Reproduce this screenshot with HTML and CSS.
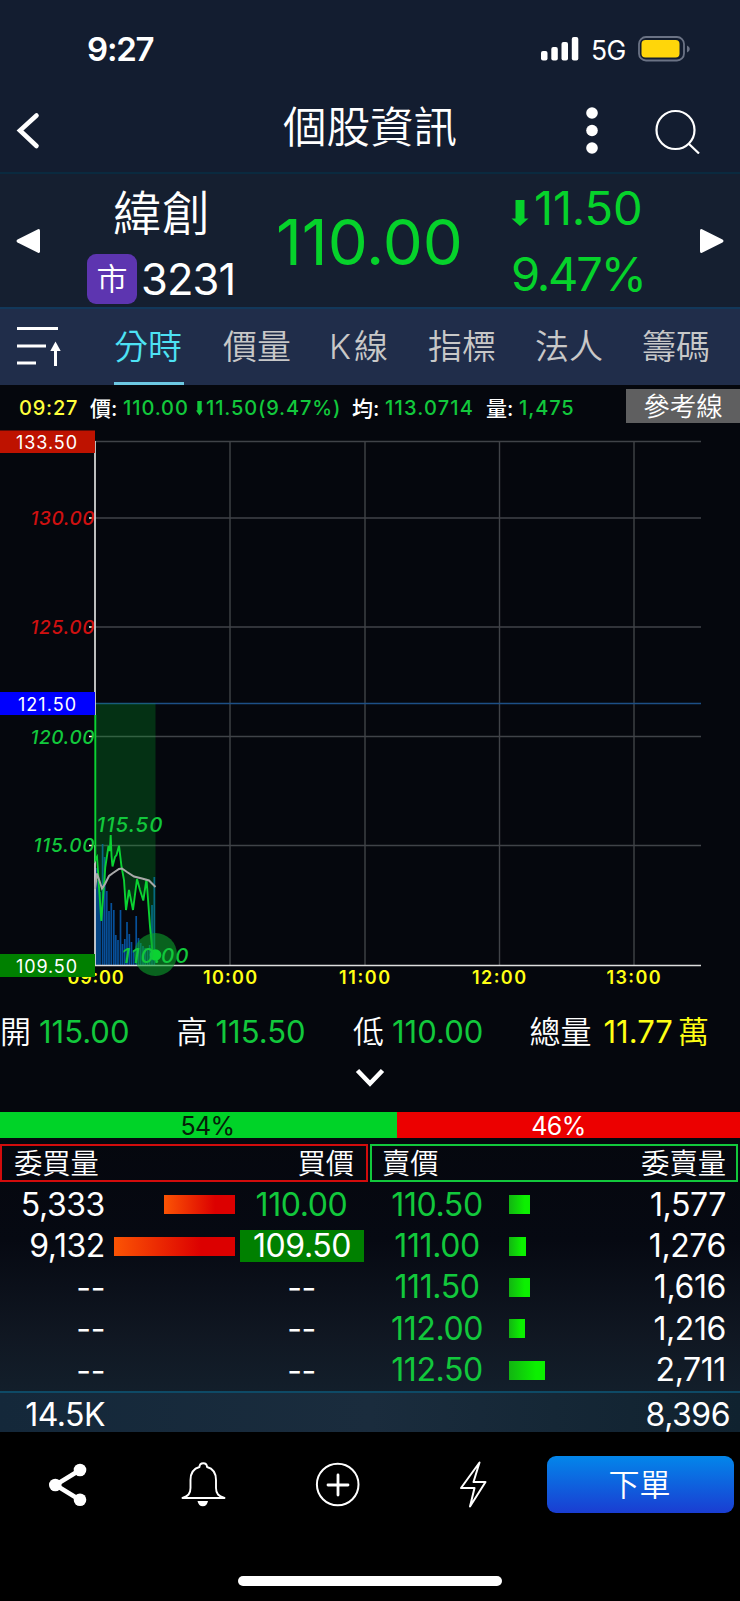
FILE: index.html
```
<!DOCTYPE html>
<html lang="zh-Hant">
<head>
<meta charset="utf-8">
<title>個股資訊</title>
<link rel="stylesheet" href="styles.css">
</head>
<body>
<div class="app">
  <header class="top">
    <div class="status">
      <span class="clock">9:27</span>
      <svg class="signal" width="38" height="24" viewBox="0 0 38 24" fill="#fff"><rect x="0" y="14" width="6.5" height="9.500" rx="2"/><rect x="10.300" y="10" width="6.500" height="13.500" rx="2"/><rect x="20.500" y="5" width="6.500" height="18.500" rx="2"/><rect x="30.800" y="0" width="6.500" height="23.500" rx="2"/></svg>
      <span class="net">5G</span>
      <svg class="battery" width="53" height="26" viewBox="0 0 53 26"><rect x="1" y="1" width="45" height="23.500" rx="7" fill="none" stroke="#6b7385" stroke-width="1.800"/><rect x="3.500" y="4" width="38" height="17.500" rx="4" fill="#ffd60a"/><path d="M49 9.500q2.800 1 2.800 3.500t-2.800 3.500z" fill="#6b7385"/></svg>
    </div>
    <div class="titlebar">
      <svg class="back" width="26" height="40" viewBox="0 0 26 40" fill="none" stroke="#fff" stroke-width="4.600" stroke-linecap="round"><path d="M21.500 5.500L5 20.500 21.500 36"/></svg>
      <h1>個股資訊</h1>
      <svg class="more" width="14" height="50" viewBox="0 0 14 50" fill="#fff"><circle cx="7" cy="8" r="5.800"/><circle cx="7" cy="25.500" r="5.800"/><circle cx="7" cy="43" r="5.800"/></svg>
      <svg class="search" width="48" height="48" viewBox="0 0 48 48" fill="none" stroke="#fff" stroke-width="2.200"><circle cx="21.500" cy="24" r="19"/><path d="M34.500 37.500L45 47.500"/></svg>
    </div>
  </header>

  <section class="quote">
    <svg class="tri" width="26" height="26" viewBox="0 0 26 26" fill="#fff"><path d="M2.500 11.500L23 1.200q2-.7 2 1.500v20.600q0 2.200-2 1.500L2.500 14.500q-2-1.500 0-3z"/></svg>
    <div class="stock">
      <div class="name">緯創</div>
      <div class="code"><span class="market">市</span><span class="num">3231</span></div>
    </div>
    <div class="price">110.00</div>
    <div class="change">
      <div class="diff"><svg width="18" height="27" viewBox="0 0 18 27" fill="#06d22b"><path d="M4.500 0h9v18.500H17.500L9 26 .5 18.500h4z"/></svg><span>11.50</span></div>
      <div class="pct">9.47%</div>
    </div>
    <svg class="tri next" width="26" height="26" viewBox="0 0 26 26" fill="#fff"><path d="M24.500 11.500L4 1.200q-2-.7-2 1.500v20.600q0 2.200 2 1.500l20.500-10.300q2-1.500 0-3z"/></svg>
  </section>

  <nav class="tabs">
    <svg class="sort" width="48" height="46" viewBox="0 0 48 46" fill="none" stroke="#fff" stroke-width="3"><path d="M2 4.500h41M2 22h29M2 39h19M40.500 42V24"/><path d="M40.500 17.500l5.200 9.500h-10.400z" fill="#fff" stroke="none"/></svg>
    <span class="tab active">分時</span><span class="tab">價量</span><span class="tab k">K線</span><span class="tab">指標</span><span class="tab">法人</span><span class="tab">籌碼</span>
  </nav>

  <section class="info">
    <span class="time">09:27</span>
    <span class="lbl p">價:</span><span class="val v1">110.00</span>
    <svg class="dn" width="7" height="15" viewBox="0 0 7 15" fill="#12c83c"><path d="M1.300 0h4.400v9.500H7L3.500 14.500 0 9.500h1.300z"/></svg><span class="val v2">11.50(9.47%)</span>
    <span class="lbl a">均:</span><span class="val v3">113.0714</span>
    <span class="lbl q">量:</span><span class="val v4">1,475</span>
    <span class="ref">參考線</span>
  </section>

  <svg class="chart" width="740" height="565" viewBox="0 425 740 565">
    <g class="grid">
      <path d="M95 441.500H701M95 518H701M95 627H701M95 736.500H701M95 845.500H701"/>
      <path d="M230 441V965M365 441V965M499.500 441V965M634 441V965"/>
    </g>
    <path d="M95 703.500H701" stroke="#1d4f86" stroke-width="1.500"/>
    <g class="vol">
      <path d="M96 868V965M98 880V965M100 892V965M102.600 844V965M104.700 857V965M106.800 891V965M109 911V965M111.300 903V965M113.800 910V965M115.800 935V965M118 940V965M120.500 910V965M122.600 944V965M124.800 939V965M127 922V965M129.300 934V965M131.500 942V965M133.700 950V965M136.200 916V965M138.500 938V965M140.700 943V965M143 946V965M145.200 948V965M147.500 948V965M149.700 945V965M152 905V965M154.300 877V965"/>
    </g>
    <path d="M95 703.500H155.500V954L152.500 952 150 926.500 146.500 879 143.300 900.500 140 890 137 879 133 910 129 890 126 910 124 880 121.500 866.500 119 845.700 116 856 112.500 866.500 110.700 835 108.500 846 105.300 867 101.300 921 97 857 95 860z" fill="#06c82f" fill-opacity=".22"/>
    <path d="M95 441V715M95 845V966" stroke="#ddd" stroke-width="1.700"/>
    <path d="M94.500 965.500H701" stroke="#ddd" stroke-width="1.600"/>
    <path d="M89 518h4M89 627h4M89 736.500h4M89 845.500h4" stroke="#fff" stroke-width="1.500"/>
    <path d="M95.300 715V860L97 857 101.300 921 105.300 867 108.500 846 109.800 851 110.700 835 111.500 856 112.500 866.500 115 857 116.500 855 119 845.700 121.500 866.500 124 880 126 910 129 890 133 910 137 879 140 890 143.300 900.500 146.500 879 150 926.500 152.500 952 155.500 955" fill="none" stroke="#0bd232" stroke-width="1.900"/>
    <path d="M95 889L97 873.500 102 888.500 105 884 109 876 113 873 119 869 122 868.500 127 872 134 876.500 142 878.500 149 880.500 155.500 887" fill="none" stroke="#a9a9a9" stroke-width="2"/>
    <g class="axis up"><text x="30.500" y="525" textLength="64">130.00</text><text x="30.500" y="634" textLength="64">125.00</text></g>
    <g class="axis down"><text x="30.500" y="743.500" textLength="64">120.00</text><text x="33.500" y="852" textLength="61">115.00</text></g>
    <g class="xaxis"><text x="67.500" y="983.500" textLength="56">09:00</text><text x="203" y="983.500" textLength="54">10:00</text><text x="339" y="983.500" textLength="51">11:00</text><text x="472" y="983.500" textLength="54">12:00</text><text x="606.500" y="983.500" textLength="54">13:00</text></g>
    <circle cx="155.500" cy="954.500" r="21.500" fill="#0ca62b" fill-opacity=".58"/>
    <circle cx="155.500" cy="955" r="5.800" fill="#0bd232"/>
    <g class="axis down big"><text x="96.500" y="832" textLength="66">115.50</text><text x="121.500" y="963" textLength="67">110.00</text></g>
    <path d="M0 430.500h95v22.500H0z" fill="#be1200"/>
    <path d="M0 692h95v23H0z" fill="#0000fe"/>
    <path d="M0 954h95v23H0z" fill="#008000"/>
    <g class="tag"><text x="16" y="449" textLength="61">133.50</text><text x="18" y="711" textLength="58">121.50</text><text x="16" y="973" textLength="61">109.50</text></g>
  </svg>

  <section class="ohlc">
    <div class="cell"><span>開</span><b>115.00</b></div>
    <div class="cell"><span>高</span><b>115.50</b></div>
    <div class="cell"><span>低</span><b>110.00</b></div>
    <div class="cell total"><span>總量</span><b>11.77</b><i>萬</i></div>
  </section>
  <div class="expand"><svg width="30" height="20" viewBox="0 0 30 20" fill="none" stroke="#fff" stroke-width="4.600"><path d="M2.500 2.500L15 15.500 27.500 2.500"/></svg></div>

  <section class="book">
    <div class="ratio"><span class="buy">54%</span><span class="sell">46%</span></div>
    <div class="heads">
      <div class="head bid"><span>委買量</span><span>買價</span></div>
      <div class="head ask"><span>賣價</span><span>委賣量</span></div>
    </div>
    <div class="row"><span class="bv">5,333</span><span class="bb"><i style="width:71px"></i></span><span class="bp">110.00</span><span class="ap">110.50</span><span class="ab"><i style="width:21px"></i></span><span class="av">1,577</span></div>
    <div class="row"><span class="bv">9,132</span><span class="bb"><i style="width:121px"></i></span><span class="bp hit">109.50</span><span class="ap">111.00</span><span class="ab"><i style="width:17px"></i></span><span class="av">1,276</span></div>
    <div class="row"><span class="bv none">--</span><span class="bb"></span><span class="bp none">--</span><span class="ap">111.50</span><span class="ab"><i style="width:21px"></i></span><span class="av">1,616</span></div>
    <div class="row"><span class="bv none">--</span><span class="bb"></span><span class="bp none">--</span><span class="ap">112.00</span><span class="ab"><i style="width:16px"></i></span><span class="av">1,216</span></div>
    <div class="row"><span class="bv none">--</span><span class="bb"></span><span class="bp none">--</span><span class="ap">112.50</span><span class="ab"><i style="width:36px"></i></span><span class="av">2,711</span></div>
    <div class="sum"><span class="bv">14.5K</span><span>8,396</span></div>
  </section>

  <footer class="bottom">
    <div class="actions">
      <svg width="135" height="58" viewBox="0 0 135 58" fill="#fff"><path d="M80 14L55.500 29 80 44" fill="none" stroke="#fff" stroke-width="4.500"/><circle cx="55.300" cy="29" r="6.300"/><circle cx="80" cy="14" r="6.300"/><circle cx="80" cy="43.700" r="6.300"/></svg>
      <svg width="135" height="58" viewBox="135 0 135 58" fill="none" stroke="#fff" stroke-width="1.900" stroke-linejoin="round"><path d="M182.500 42C188 40 190.500 38 190.500 32V24C190.500 16 194 12.500 199.500 11C199.500 6 207 6 207 11C212.500 12.500 216 16 216 24V32C216 38 218.500 40 224.500 42Z"/><path d="M197.500 45h10.500q-1 5.300-5.200 5.300t-5.300-5.300z" fill="#fff" stroke="none"/></svg>
      <svg width="135" height="58" viewBox="270 0 135 58" fill="none" stroke="#fff"><circle cx="337.700" cy="28.500" r="20.800" stroke-width="2"/><path d="M338 19v20M328 29h20" stroke-width="2.800" stroke-linecap="round"/></svg>
      <svg width="142" height="58" viewBox="405 0 142 58" fill="none" stroke="#fff" stroke-width="2" stroke-linejoin="round"><path d="M479.500 6.500L461 32H474.500L470 50.500 485.500 26H473.500z"/></svg>
      <span class="order">下單</span>
    </div>
    <div class="home"></div>
  </footer>
</div>
</body>
</html>
```
FILE: styles.css
```
* { box-sizing: border-box; }
body {
  margin: 0;
  background: #000;
  color: #fff;
  font-family: Inter, "Noto Sans CJK TC", sans-serif;
  line-height: 1;
}
.app { width: 740px; height: 1601px; overflow: hidden; background: #05070d; white-space: nowrap; }
svg { display: block; flex: none; }

.top { height: 174px; background: #131d30; border-bottom: 2px solid #0a2a3f; }
.status { display: flex; align-items: center; height: 98px; padding-left: 87px; }
.clock { width: 454px; font-size: 33px; font-weight: 600; letter-spacing: -1.2px; }
.net { margin-left: 12px; width: 47px; font-size: 26.5px; padding-top: 2px; letter-spacing: -.5px; }
.battery { margin-bottom: 1px; }
.titlebar { display: flex; align-items: center; height: 64px; padding-left: 15px; }
h1 { margin: 0 0 4px 242px; width: 302px; font-size: 43.500px; font-weight: 350; }
.search { margin-left: 55px; }

.quote { display: flex; align-items: center; height: 133px; background: #151f30; padding-left: 15px; }
.stock { width: 160px; margin-left: 46px; }
.name { height: 78px; padding: 16px 0 0 26px; font-size: 48px; font-weight: 350; letter-spacing: 1px; }
.code { display: flex; align-items: center; height: 55px; padding-bottom: 2px; }
.market { width: 50px; height: 50px; border-radius: 9px; background: #5d35b0; font-size: 31px; line-height: 50px; text-align: center; font-weight: 350; }
.num { margin-left: 4px; padding-top: 2px; font-size: 43.500px; letter-spacing: -.9px; }
.price, .change { color: #06d22b; }
.price { width: 212px; margin-left: 29px; padding-top: 3px; font-size: 63.500px; }
.change { width: 150px; margin-left: 23px; }
.diff { display: flex; align-items: center; height: 66px; font-size: 47px; letter-spacing: -.2px; }
.diff svg { margin-top: 12px; margin-right: 5px; }
.pct { height: 67px; padding-top: 10px; font-size: 47px; letter-spacing: -2.200px; }
.next { margin-left: 37px; }

.tabs { display: flex; align-items: center; height: 78px; background: #202d4a; border-top: 2px solid #12385a; padding-left: 15px; color: #c8c8c8; }
.tab { height: 76px; line-height: 76px; width: 68px; margin-left: 39px; font-size: 34px; font-weight: 350; }
.tab.active { margin-left: 51px; width: 70px; color: #4de2f4; border-bottom: 3px solid #6cc8e2; }
.tab.k { width: 60px; margin-left: 38px; letter-spacing: 3px; }
.sort { margin-top: -1px; }

.info { display: flex; align-items: center; height: 40px; padding-top: 6px; font-size: 20px; font-weight: 500; color: #12c83c; }
.time { color: #ffff3c; width: 71px; margin-left: 19px; letter-spacing: .8px; }
.lbl { color: #fff; width: 33px; font-size: 21px; }
.v1 { width: 73px; letter-spacing: .9px; }
.v2 { width: 146px; margin-left: 3px; letter-spacing: .85px; }
.v3 { width: 101px; letter-spacing: 1.200px; }
.v4 { letter-spacing: .9px; flex: 1; }
.ref { width: 114px; height: 34px; margin-bottom: 4px; background: #5f5f60; color: #fff; font-size: 26.500px; font-weight: 350; line-height: 34px; text-align: center; }

.grid { stroke: #404348; stroke-width: 1.400; }
.vol { stroke: #07509a; stroke-width: 1.700; }
.axis { font-size: 19px; font-style: italic; font-weight: 550; }
.axis.big { font-size: 20.500px; }
.up { fill: #cf1010; }
.down { fill: #12c83c; }
.xaxis { font-size: 18px; font-weight: 600; fill: #ffff14; }
.tag { font-size: 18px; fill: #fff; }

.ohlc { display: grid; grid-template-columns: 176.500px 176.500px 176.500px 1fr; align-items: center; height: 72px; padding-top: 10px; font-size: 31px; }
.cell { display: flex; }
.cell span { width: 39px; font-weight: 350; }
.cell b { font-weight: 400; color: #12c83c; }
.total span { width: 74px; }
.total b, .total i { color: #ffff14; font-style: normal; }
.total i { margin-left: 5px; font-weight: 350; }
.expand { height: 50px; padding-top: 6px; display: flex; justify-content: center; }

.book { height: 320px; background: linear-gradient(180deg, #05070d 0, #060912 40%, #101722 70%, #142431 100%); }
.ratio { display: flex; height: 26px; font-size: 25px; line-height: 29px; text-align: center; letter-spacing: -.6px; }
.buy { width: 397px; padding-left: 18px; background: #00d328; color: #052008; }
.sell { flex: 1; padding-right: 20px; background: #ec0000; }
.heads { display: grid; grid-template-columns: 368px 368px; gap: 2px; padding: 6px 0 2px; }
.head { display: flex; justify-content: space-between; height: 38px; line-height: 37px; padding: 0 12px; border: 2px solid #d20c0c; font-size: 28.300px; font-weight: 350; }
.ask { border-color: #12c83c; padding: 0 10px; }
.row { display: grid; grid-template-columns: 105px 130px 133px 138px 119px 101px; align-items: center; height: 41.400px; font-size: 32px; letter-spacing: -.4px; }
.bv, .av { text-align: right; }
.bb { display: flex; justify-content: flex-end; }
.bb i, .ab i { display: block; height: 19px; }
.bb i { background: linear-gradient(90deg, #fb5404, #dc0000 72%); }
.ab i { background: linear-gradient(90deg, #12b412, #0cf000 75%); }
.ab { padding-left: 3px; }
.bp, .ap { text-align: center; color: #12c83c; }
.bp.hit { width: 124px; height: 32px; line-height: 32px; margin-left: 5px; background: #008000; color: #fff; }
.bp.none { color: #fff; }
.none { padding-top: 1px; }
.sum { display: flex; justify-content: space-between; align-items: center; height: 41px; border-top: 2px solid #0e4a66; padding: 6px 10px 0 0; background: linear-gradient(90deg, #14283a, #1a2c3d 50%, #10222f); font-size: 32px; letter-spacing: -.5px; }
.sum .bv { width: 105px; }

.bottom { height: 169px; background: #000; padding-top: 24px; }
.actions { display: flex; height: 58px; }
.order { width: 187px; height: 57px; border-radius: 9px; background: linear-gradient(#0386ea, #1a3dd2); font-size: 31px; font-weight: 350; line-height: 58px; text-align: center; padding-right: 2px; }
.home { width: 264px; height: 10px; margin: 62px auto 0; border-radius: 5px; background: #fff; }
```
